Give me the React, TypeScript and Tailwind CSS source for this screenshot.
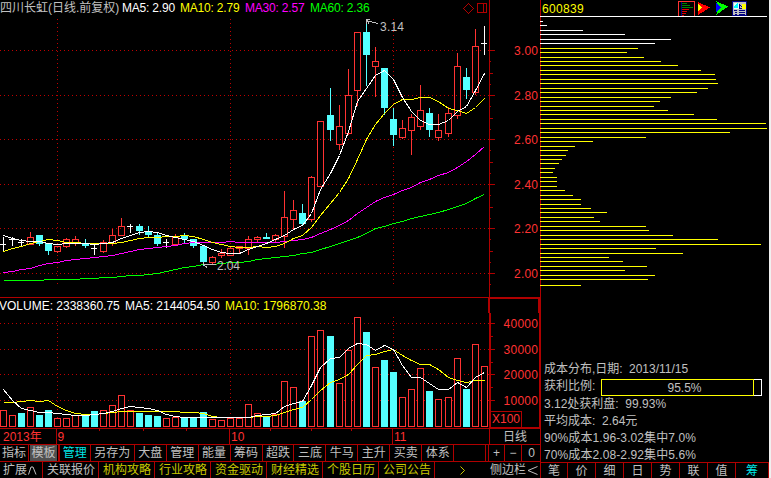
const RED = '#ff3232'
const DARK = '#b00000'
const CYAN = '#54ffff'

// x, kind (r: up, c: down, w: flat), high, low, body top, body bottom, volume top
type Candle = [number, string, number, number, number, number, number]

const candles: Candle[] = [
  [3, 'w', 237, 251, 244, 244, 410],
  [12, 'w', 237, 245, 239, 239, 415],
  [21, 'w', 239, 246, 242, 242, 413],
  [30, 'r', 232, 244, 237, 244, 407],
  [39, 'c', 235, 245, 235, 243, 415],
  [48, 'c', 243, 254, 243, 250, 410],
  [57, 'r', 246, 252, 246, 251, 418],
  [66, 'r', 238, 247, 239, 246, 418],
  [75, 'r', 236, 245, 239, 242, 415],
  [85, 'c', 239, 247, 243, 245, 415],
  [94, 'w', 245, 254, 248, 248, 411],
  [103, 'r', 240, 252, 242, 251, 410],
  [112, 'r', 229, 245, 235, 243, 405],
  [121, 'r', 218, 235, 226, 235, 395],
  [130, 'w', 224, 232, 226, 226, 410],
  [139, 'c', 224, 234, 226, 230, 413],
  [148, 'c', 226, 237, 231, 234, 415],
  [157, 'c', 233, 245, 235, 243, 416],
  [166, 'w', 239, 247, 242, 242, 418],
  [175, 'r', 234, 244, 236, 244, 417],
  [184, 'c', 233, 243, 235, 238, 417],
  [193, 'c', 239, 247, 239, 245, 417],
  [203, 'c', 246, 265, 246, 261, 412],
  [212, 'r', 256, 263, 257, 262, 419],
  [221, 'r', 249, 257, 253, 255, 420],
  [230, 'r', 247, 255, 248, 255, 418],
  [239, 'r', 246, 252, 246, 248, 418],
  [248, 'r', 236, 254, 239, 248, 404],
  [257, 'r', 236, 242, 237, 239, 413],
  [266, 'c', 233, 238, 237, 238, 416],
  [275, 'r', 234, 242, 235, 239, 414],
  [284, 'r', 191, 247, 217, 236, 381],
  [293, 'r', 200, 228, 210, 219, 387],
  [302, 'c', 204, 225, 213, 223, 401],
  [311, 'r', 176, 221, 177, 219, 336],
  [320, 'r', 121, 186, 121, 186, 330],
  [330, 'c', 88, 140, 115, 129, 336],
  [339, 'r', 105, 149, 126, 144, 383],
  [348, 'r', 69, 134, 95, 133, 350],
  [357, 'r', 32, 105, 32, 90, 317],
  [366, 'c', 19, 85, 32, 54, 332],
  [375, 'r', 47, 96, 61, 66, 367],
  [384, 'c', 68, 114, 68, 107, 360],
  [393, 'c', 108, 145, 119, 134, 372],
  [402, 'r', 120, 138, 128, 137, 397],
  [411, 'r', 114, 154, 117, 130, 389],
  [420, 'r', 85, 129, 110, 126, 368],
  [429, 'c', 108, 136, 113, 129, 391],
  [438, 'r', 114, 140, 130, 137, 399],
  [448, 'r', 107, 136, 113, 133, 397],
  [457, 'r', 53, 118, 66, 115, 358],
  [466, 'c', 68, 98, 77, 89, 389],
  [475, 'r', 29, 94, 46, 92, 344],
  [484, 'w', 26, 54, 43, 43, 366],
]

// volume columns of the flat days keep their own direction
const volumeKind: Record<number, string> = { 0: 'r', 1: 'r', 2: 'c', 10: 'c', 14: 'r', 18: 'r', 53: 'r' }

const ma5 = [
  235, 238, 240, 241, 241, 243, 244, 243, 243, 243, 244, 243, 242, 238, 235, 232, 231, 232, 235, 237, 239, 241, 245,
  249, 252, 253, 253, 249, 246, 243, 239, 235, 229, 225, 213, 189, 173, 155, 131, 101, 88, 75, 70, 79, 97, 111, 120,
  124, 124, 120, 111, 106, 90, 73,
]
const ma10 = [
  251, 248, 246, 243, 241, 239, 240, 242, 242, 243, 243, 243, 243, 242, 240, 238, 237, 237, 236, 236, 235, 236, 239,
  242, 244, 246, 247, 247, 246, 247, 246, 243, 238, 235, 227, 215, 203, 192, 178, 159, 139, 124, 113, 104, 99, 99, 97,
  97, 101, 108, 110, 113, 107, 98,
]
const ma30 = [
  272, 271, 269, 268, 265, 263, 262, 260, 259, 258, 257, 256, 255, 253, 251, 249, 248, 247, 246, 245, 243, 242, 242,
  242, 242, 241, 242, 242, 242, 242, 242, 241, 240, 239, 237, 233, 229, 225, 220, 213, 207, 201, 197, 194, 190, 187,
  182, 179, 175, 172, 167, 161, 154, 146,
]
const ma60 = [
  280, 280, 280, 280, 280, 279, 279, 279, 279, 278, 278, 277, 277, 276, 275, 275, 274, 273, 271, 269, 267, 266, 264,
  264, 263, 262, 262, 261, 259, 258, 257, 256, 255, 253, 252, 249, 246, 243, 240, 237, 233, 228, 226, 223, 221, 218,
  216, 214, 212, 209, 206, 203, 198, 194,
]
const vol5 = [
  389, 400, 408, 410, 412, 412, 413, 414, 415, 415, 414, 413, 411, 408, 406, 407, 408, 410, 414, 416, 417, 417, 417,
  417, 417, 417, 417, 417, 415, 414, 413, 406, 403, 401, 385, 367, 358, 357, 348, 343, 344, 350, 345, 349, 365, 377,
  377, 383, 389, 389, 382, 387, 377, 372,
]
const vol10 = [
  402, 402, 401, 400, 401, 400, 406, 410, 413, 414, 414, 413, 412, 411, 411, 411, 411, 411, 411, 411, 412, 412, 413,
  416, 417, 417, 417, 417, 416, 416, 415, 412, 409, 407, 399, 390, 382, 379, 374, 364, 355, 354, 351, 349, 355, 360,
  364, 364, 369, 377, 380, 382, 380, 380,
]

// y, length of each cost bar
const costs: [number, number][] = [
  [21, 3], [25, 7], [30, 43], [34, 85], [39, 131], [43, 115], [48, 98], [52, 87], [57, 104], [61, 121], [65, 138],
  [70, 161], [74, 175], [79, 176], [83, 178], [88, 168], [92, 157], [97, 131], [101, 120], [106, 114], [110, 128],
  [114, 154], [119, 177], [123, 226], [128, 227], [132, 190], [137, 106], [141, 53], [146, 35], [150, 28], [155, 26],
  [159, 22], [163, 19], [168, 15], [172, 13], [177, 17], [181, 17], [186, 17], [190, 25], [195, 33], [199, 41],
  [204, 41], [208, 51], [212, 67], [217, 54], [221, 60], [226, 106], [230, 109], [235, 133], [239, 178], [244, 221],
  [248, 116], [253, 143], [257, 69], [261, 83], [266, 107], [270, 85], [275, 115], [279, 108], [285, 41],
]

const priceTicks: [number, string][] = [
  [50, '3.00'], [95, '2.80'], [139, '2.60'], [184, '2.40'], [228, '2.20'], [273, '2.00'],
]
const volumeTicks: [number, string][] = [[323, '40000'], [349, '30000'], [374, '20000'], [400, '10000']]
const months = [57, 230, 393]
const weeks = [99, 143, 186, 270, 311, 351]

const menu = [
  ['指标', 'w-[29px]'],
  ['模板', 'w-[31px]'],
  ['管理', 'w-[31px]'],
  ['另存为', 'w-[44px]'],
  ['大盘', 'w-[32px]'],
  ['管理', 'w-[32px]'],
  ['能量', 'w-[32px]'],
  ['筹码', 'w-[32px]'],
  ['超跌', 'w-[32px]'],
  ['三底', 'w-[32px]'],
  ['牛马', 'w-[32px]'],
  ['主升', 'w-[32px]'],
  ['买卖', 'w-[32px]'],
  ['体系', 'w-[32px]'],
  ['', 'w-[32px]'],
]
const links = ['机构攻略', '行业攻略', '资金驱动', '财经精选', '个股日历', '公司公告']
const tabs = ['笔', '价', '细', '日', '势', '联', '值', '筹']

const points = (ys: number[]) => ys.map((y, i) => `${candles[i][0] + 0.5},${y + 0.5}`).join(' ')

const Curve = ({ ys, color }: { ys: number[]; color: string }) => (
  <polyline points={points(ys)} fill="none" stroke={color} />
)

const Grid = ({ rows, from, to }: { rows: number[]; from: number; to: number }) => (
  <g stroke="#c00000" strokeDasharray="1 3">
    {rows.map((y) => (
      <line key={y} x1="0" x2="489" y1={y + 0.5} y2={y + 0.5} />
    ))}
    {months.map((x) => (
      <line key={x} x1={x + 0.5} x2={x + 0.5} y1={from} y2={to} />
    ))}
  </g>
)

const Stick = ({ c }: { c: Candle }) => {
  const [x, kind, high, low, top, bottom] = c
  if (kind === 'w') {
    return (
      <g fill="#ffffff">
        <rect x={x} y={high} width="1" height={low - high + 1} />
        <rect x={x - 3} y={top} width="6" height="1" />
      </g>
    )
  }
  const color = kind === 'r' ? RED : CYAN
  return (
    <g fill={color}>
      {high < top && <rect x={x} y={high} width="1" height={top - high} />}
      {low > bottom && <rect x={x} y={bottom + 1} width="1" height={low - bottom} />}
      {kind === 'c' ? (
        <rect x={x - 3} y={top} width="7" height={bottom - top + 1} />
      ) : (
        <rect x={x - 2.5} y={top + 0.5} width="6" height={bottom - top} fill="none" stroke={RED} />
      )}
    </g>
  )
}

const PriceChart = () => (
  <svg className="block" width="540" height="281" viewBox="0 17 540 281" shapeRendering="crispEdges">
    <Grid rows={priceTicks.map((t) => t[0])} from={19} to={286} />
    {candles.map((c) => (
      <Stick key={c[0]} c={c} />
    ))}
    <Curve ys={ma60} color="#00ff00" />
    <Curve ys={ma30} color="#ff00ff" />
    <Curve ys={ma10} color="#ffff00" />
    <Curve ys={ma5} color="#ffffff" />
    <g stroke="#c0c0c0" fill="none">
      <path d="M366.5 20.5 L378 23.5 M366.5 24 V19.5 H370 M366.5 20.5 L369 23.5" />
      <path d="M203.5 264.5 H216 M203.5 262 V264.5 L207 267.5" />
    </g>
    <g fill="#c0c0c0" fontSize="12">
      <text x="380" y="31" textLength="24">3.14</text>
      <text x="217" y="270" textLength="23">2.04</text>
    </g>
    <g fill={DARK}>
      <rect x="489" y="17" width="1" height="281" />
      <rect x="0" y="297" width="540" height="1" />
      {priceTicks.map(([y]) => (
        <g key={y}>
          <rect x="490" y={y} width="5" height="1" />
          <rect x="490" y={y + 11} width="1" height="1" />
          {y < 270 && <rect x="490" y={y + 23} width="3" height="1" />}
          {y < 270 && <rect x="490" y={y + 34} width="1" height="1" />}
        </g>
      ))}
    </g>
    <g fill={RED} fontSize="12" textAnchor="end">
      {priceTicks.map(([y, label]) => (
        <text key={y} x="538" y={y + 5} textLength="24">{label}</text>
      ))}
    </g>
  </svg>
)

const VolumeChart = () => (
  <svg className="block" width="541" height="116" viewBox="0 313 541 116" shapeRendering="crispEdges">
    <Grid rows={volumeTicks.map((t) => t[0])} from={317} to={427} />
    {candles.map(([x, k, , , , , top], i) =>
      (volumeKind[i] ?? k) === 'c' ? (
        <rect key={x} x={x - 3} y={top} width="7" height={427 - top} fill={CYAN} />
      ) : (
        <rect key={x} x={x - 2.5} y={top + 0.5} width="6" height={426 - top} fill="#000000" stroke={RED} />
      ),
    )}
    <Curve ys={vol10} color="#ffff00" />
    <Curve ys={vol5} color="#ffffff" />
    <g fill={DARK}>
      <rect x="0" y="428" width="541" height="1" />
      <rect x="489" y="313" width="2" height="115" />
      <rect x="539" y="313" width="2" height="115" />
      <rect x="490" y="427" width="50" height="1" />
      {volumeTicks.map(([y]) => (
        <g key={y}>
          <rect x="491" y={y} width="4" height="1" />
          <rect x="491" y={y + 13} width="2" height="1" />
        </g>
      ))}
    </g>
    <rect x="490.5" y="411.5" width="31" height="16" fill="#000000" stroke={DARK} />
    <g fill={RED} fontSize="12">
      <text x="492" y="423" textLength="28">X100</text>
      {volumeTicks.map(([y, label]) => (
        <text key={y} x="538" y={y + 5} textLength="34.5" textAnchor="end">{label}</text>
      ))}
    </g>
  </svg>
)

const DateRow = () => (
  <div className="flex h-[16px] border-b border-[#b00000] leading-[16px] text-[#ff3232]">
    <div className="w-[56px] pl-[3px]">2013年</div>
    <div className="w-[433px]">
      <svg className="block" width="433" height="15" viewBox="56 429 433 15" shapeRendering="crispEdges">
        <g fill={DARK}>
          {months.map((x) => (
            <rect key={x} x={x - 1} y="429" width="1" height="15" />
          ))}
          {weeks.map((x) => (
            <rect key={x} x={x} y="429" width="1" height="2" />
          ))}
        </g>
        <g fill={RED} fontSize="12">
          <text x="57.5" y="441">9</text>
          <text x="231" y="441">10</text>
          <text x="394" y="441">11</text>
        </g>
      </svg>
    </div>
    <div className="w-[51px] border-l border-[#b00000] text-center text-[#c0c0c0]">日线</div>
  </div>
)

const MenuRow = () => (
  <div className="flex h-[17px] border-b border-[#b00000] leading-[17px] text-[#c0c0c0]">
    {menu.map(([label, width], i) => (
      <div
        key={i}
        className={`${width} flex justify-center border-[#b00000] ${i === 1 ? 'border-r-2' : 'border-r'} ${i === 2 ? 'text-[#00e6e6]' : ''}`}
      >
        <span className={i === 1 ? 'w-[27px] bg-[#505050] text-center' : ''}>{label}</span>
      </div>
    ))}
    <div className="w-[3px] border-r border-[#b00000]" />
    <div className="w-[16px] border-r border-[#b00000] text-center">+</div>
    <div className="w-[17px] border-r border-[#b00000] text-center">−</div>
    <div className="w-[18px] pl-px text-center">0</div>
  </div>
)

const LinkRow = () => (
  <div className="flex h-[16px] leading-[17px] text-[#c8c800]">
    <div className="flex w-[43px] items-center border-r border-[#b00000] pl-[3px] text-[#c0c0c0]">
      扩展
      <svg className="ml-px" width="9" height="9" viewBox="0 0 9 9" fill="none" stroke="currentColor">
        <path d="M0.5 8.5 L3 1 H5 L8 8.5" />
      </svg>
    </div>
    <div className="w-[56px] border-r border-[#b00000] pl-[4px] text-[#c0c0c0]">关联报价</div>
    {links.map((l) => (
      <div key={l} className="w-[56px] border-r border-[#b00000] pl-[4px]">{l}</div>
    ))}
    <div className="flex w-[55px] items-center justify-center">
      <svg width="5" height="9" viewBox="0 0 5 9" fill="none" stroke="currentColor">
        <path d="M0.5 0.5 L4.5 4.5 L0.5 8.5" />
      </svg>
    </div>
    <div className="flex w-[50px] items-center text-[#c0c0c0]">
      侧边栏
      <svg className="ml-px" width="11" height="9" viewBox="0 0 11 9" fill="none" stroke="currentColor">
        <path d="M10.5 0.5 L1 4.5 L10.5 8.5" />
      </svg>
    </div>
  </div>
)

const HeaderIcons = () => (
  <svg width="72" height="18" viewBox="679 0 72 18" shapeRendering="crispEdges">
    <rect x="679.5" y="1.5" width="16" height="15" fill="none" stroke={RED} />
    <path d="M682.5 2 V16" stroke="#000080" />
    <path d="M683 3.5 H688 M683 5.5 H691 M683 7.5 H694" stroke="#008000" />
    <path d="M683 9.5 H690 M683 11.5 H688 M683 13.5 H687 M683 15.5 H685" stroke="#e00000" />
    <path d="M699 2 L711 7.5 L699 15 Z" fill="#ff0000" />
    <path d="M699 4 L703 7.5 L699 12 Z" fill="#ffff00" />
    <path d="M717 1 L729 6.5 L717 15 L720 7 Z" fill="#00ff00" />
    <path d="M717 3 L722 7 L717 12 Z" fill="#0000ff" />
    <rect x="733.5" y="1.5" width="14" height="14" fill="#c0c0c0" stroke="#000080" />
    <rect x="735" y="3" width="5" height="6" fill="#e0ffff" />
    <path d="M736 5 L739 3 L739 8 L735 8 Z" fill="#00ffff" />
    <rect x="743" y="4" width="4" height="5" fill="#ffff00" />
    <path d="M740 4 V8 H743 M740 4 L743 7" fill="none" stroke="#000080" />
    <path d="M735 10.5 H738 M740 10.5 H746 M736 12.5 H738 M740 12.5 H746 M736 14 H738 M740 14 H746" stroke="#000080" />
  </svg>
)

const CostPanel = () => (
  <div className="flex h-full w-[229px] flex-col border-l border-[#b00000] text-[#c0c0c0]">
    <div className="flex h-[16px] justify-between pr-[19px]">
      <span className="pl-px leading-[18px] tracking-[0.35px] text-[#ffff00]">600839</span>
      <HeaderIcons />
    </div>
    <svg className="-ml-px block" width="229" height="344" viewBox="0 16 229 344" shapeRendering="crispEdges">
      <rect x="0" y="16" width="227" height="1" fill="#ffffff" />
      {costs.map(([y, w]) => (
        <rect key={y} x="0" y={y} width={w} height="1" fill={y < 45 ? '#ffffff' : '#ffff00'} />
      ))}
    </svg>
    <div className="flex h-[102px] flex-col pl-[3px] pt-px leading-[17px]">
      <div className="flex">
        <span className="w-[85px]">成本分布,日期:</span>
        <span>2013/11/15</span>
      </div>
      <div className="flex">
        <span className="w-[57px]">获利比例:</span>
        <div className="mt-px flex h-[17px] w-[161px] border border-white text-center leading-[16px]">
          <span className="-my-px -ml-px w-[153px] border border-[#ffff00] pl-[14px]">95.5%</span>
        </div>
      </div>
      <div>3.12处获利盘:&nbsp; 99.93%</div>
      <div>平均成本:&nbsp; 2.64元</div>
      <div className="tracking-[0.1px]">90%成本1.96-3.02集中7.0%</div>
      <div className="tracking-[0.1px]">70%成本2.08-2.92集中5.6%</div>
    </div>
    <div className="flex h-[16px] border-t border-[#b00000] leading-[16px]">
      {tabs.map((t, i) => (
        <div
          key={t}
          className={`border-r border-[#b00000] text-center ${i === 0 ? 'w-[27px]' : i === 7 ? 'w-[33px] text-[#00e6e6]' : 'w-[28px]'}`}
        >
          {t}
        </div>
      ))}
    </div>
  </div>
)

export default function App() {
  return (
    <div className="flex h-[478px] w-[771px] overflow-hidden whitespace-nowrap bg-black font-['Liberation_Sans','Noto_Sans_CJK_SC',sans-serif] text-[12px]">
      <div className="w-[540px] shrink-0">
        <div className="flex h-[17px] leading-[17px]">
          <div className="flex w-[490px] items-center border-r border-[#b00000]">
            <span className="w-[122px] text-[#c0c0c0]">四川长虹(日线.前复权)</span>
            <span className="w-[58px] tracking-[-0.2px] text-white">MA5: 2.90</span>
            <span className="w-[65px] tracking-[-0.2px] text-[#ffff00]">MA10: 2.79</span>
            <span className="w-[65px] tracking-[-0.2px] text-[#ff00ff]">MA30: 2.57</span>
            <span className="w-[153px] tracking-[-0.2px] text-[#00ff00]">MA60: 2.36</span>
            <svg width="25" height="11" viewBox="0 0 25 11" fill="none" stroke={DARK} shapeRendering="crispEdges">
              <path d="M5.5 0.5 L10.5 5.5 L5.5 10.5 L0.5 5.5 Z" />
              <path d="M14.5 0.5 H23.5 V9.5 H14.5 Z M20.5 0.5 V9.5" />
            </svg>
          </div>
        </div>
        <PriceChart />
        <div className="flex h-[15px] leading-[16px]">
          <div className="flex w-[489px]">
            <span className="-ml-px w-[126px] text-white">VOLUME: 2338360.75</span>
            <span className="w-[100px] text-white">MA5: 2144054.50</span>
            <span className="text-[#ffff00]">MA10: 1796870.38</span>
          </div>
          <div className="w-[52px] shrink-0 border-x-2 border-t border-[#b00000]" />
        </div>
        <VolumeChart />
        <DateRow />
        <MenuRow />
        <LinkRow />
      </div>
      <CostPanel />
      <div className="w-[2px] bg-[#f0f0f0]" />
    </div>
  )
}
